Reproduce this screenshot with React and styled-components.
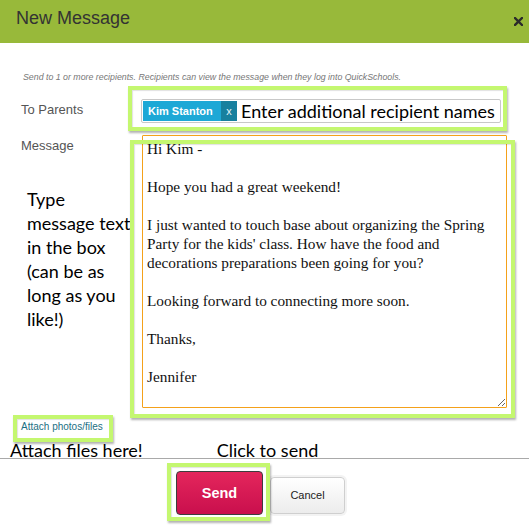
import React from "react";
import styled, { createGlobalStyle } from "styled-components";

const GlobalStyle = createGlobalStyle`
  body {
    margin: 0;
    background: #fff;
    font-family: "Liberation Sans", Arial, sans-serif;
  }
`;

const messageText = `Hi Kim -

Hope you had a great weekend!

I just wanted to touch base about organizing the Spring Party for the kids' class. How have the food and decorations preparations been going for you?

Looking forward to connecting more soon.

Thanks,

Jennifer`;

const App = () => {
  return (
    <Dialog>
      <GlobalStyle />
      <Header>
        <Title>New Message</Title>
        <CloseButton aria-label="close">
          <svg width="9" height="9" viewBox="0 0 9 9">
            <path d="M1 1L8 8M8 1L1 8" stroke="#2b2b2b" strokeWidth="2.4" strokeLinecap="square" />
          </svg>
        </CloseButton>
      </Header>

      <Body>
        <Hint>
          Send to 1 or more recipients. Recipients can view the message when they log into
          QuickSchools.
        </Hint>

        <FieldRow $gap={12}>
          <LabelCol>
            <Label>To Parents</Label>
          </LabelCol>
          <Field $width={360}>
            <RecipientBox>
              <Chip>
                <ChipName>Kim Stanton</ChipName>
                <ChipRemove>x</ChipRemove>
              </Chip>
              <RecipientInput placeholder="Enter additional recipient names" />
            </RecipientBox>
            <Highlight $top={-13} $left={-13} $right={-6} $bottom={-8} />
          </Field>
        </FieldRow>

        <FieldRow $gap={13}>
          <LabelCol>
            <Label>Message</Label>
            <Note $top={33} $left={6} $lh={24}>
              Type
              <br />
              message text
              <br />
              in the box
              <br />
              (can be as
              <br />
              long as you
              <br />
              like!)
            </Note>
          </LabelCol>
          <Field $width={365} $offset={1}>
            <MessageBox readOnly defaultValue={messageText} />
            <Highlight $top={5} $left={-12} $right={-8} $bottom={-10} />
          </Field>
        </FieldRow>

        <AttachRow>
          <AttachLink href="#">Attach photos/files</AttachLink>
          <Highlight $top={-6} $left={-8} $right={-10} $bottom={-9} />
        </AttachRow>

        <NoteRow>
          <Note $left={-11} $lh={18}>Attach files here!</Note>
          <Note $left={74} $lh={18}>Click to send</Note>
        </NoteRow>
      </Body>

      <Footer>
        <ButtonWrap>
          <SendButton>Send</SendButton>
          <Highlight $top={-8} $left={-9} $right={-7} $bottom={-6} />
        </ButtonWrap>
        <CancelButton>Cancel</CancelButton>
      </Footer>
    </Dialog>
  );
};

export default App;

const Dialog = styled.div`
  width: 529px;
  height: 526px;
  overflow: hidden;
  background: #fff;
`;

const Header = styled.div`
  height: 43px;
  background: #98b93a;
  display: flex;
  align-items: flex-start;
  justify-content: space-between;
  padding: 7px 0 0 16px;
  box-sizing: border-box;
`;

const Title = styled.h1`
  margin: 0;
  font-size: 18px;
  line-height: 22px;
  font-weight: normal;
  color: #333;
`;

const CloseButton = styled.span`
  display: flex;
  margin: 10px 6px 0 0;
`;

const Body = styled.div`
  padding: 28px 0 0 21px;
`;

const Hint = styled.div`
  font-size: 8.8px;
  line-height: 12px;
  font-style: italic;
  color: #777;
  padding-left: 2px;
  margin-bottom: 16px;
`;

const FieldRow = styled.div`
  display: grid;
  grid-template-columns: 120px auto;
  align-items: start;
  margin-bottom: ${(p) => p.$gap}px;
`;

const LabelCol = styled.div`
  display: flex;
  flex-direction: column;
`;

const Label = styled.div`
  font-size: 13px;
  line-height: 16px;
  color: #555;
  padding-top: 3px;
`;

const Note = styled.div`
  position: relative;
  z-index: 0;
  margin-top: ${(p) => p.$top || 0}px;
  margin-left: ${(p) => p.$left || 0}px;
  font-family: Lato, "Open Sans", sans-serif;
  font-size: 18px;
  line-height: ${(p) => p.$lh}px;
  color: #000;
  white-space: nowrap;
`;

const Field = styled.div`
  position: relative;
  width: ${(p) => p.$width}px;
  margin-left: ${(p) => p.$offset || 0}px;
  z-index: 1;
`;

const Highlight = styled.span`
  position: absolute;
  top: ${(p) => p.$top}px;
  left: ${(p) => p.$left}px;
  right: ${(p) => p.$right}px;
  bottom: ${(p) => p.$bottom}px;
  border: 4px solid #c4f770;
  box-shadow: 1px 2px 2px rgba(0, 0, 0, 0.3), inset 1px 1px 1px rgba(0, 0, 0, 0.12);
  pointer-events: none;
`;

const RecipientBox = styled.div`
  height: 24px;
  box-sizing: border-box;
  border: 1px solid #c8c8c8;
  border-radius: 2px;
  background: #fff;
  display: flex;
  align-items: center;
  padding-left: 1px;
  overflow: hidden;
`;

const Chip = styled.span`
  display: flex;
  height: 20px;
  flex-shrink: 0;
`;

const ChipName = styled.span`
  background: #1da8d6;
  color: #fff;
  font-size: 11px;
  font-weight: bold;
  line-height: 20px;
  padding: 0 6px 0 5px;
  width: 67px;
`;

const ChipRemove = styled.span`
  background: #18809e;
  color: #e6f5fa;
  font-size: 11px;
  line-height: 20px;
  width: 16px;
  text-align: center;
`;

const RecipientInput = styled.input`
  border: none;
  outline: none;
  flex: 1;
  min-width: 0;
  padding: 0 0 0 4px;
  font-family: Lato, "Open Sans", sans-serif;
  font-size: 18px;
  color: #000;
  background: transparent;
  &::placeholder {
    color: #000;
    opacity: 1;
  }
`;

const MessageBox = styled.textarea`
  display: block;
  width: 100%;
  height: 273px;
  box-sizing: border-box;
  border: 1px solid #f4a11a;
  border-radius: 1px;
  padding: 3px 4px;
  margin: 0;
  resize: vertical;
  outline: none;
  font-family: "Liberation Serif", Georgia, serif;
  font-size: 15.3px;
  line-height: 19px;
  color: #111;
  overflow: hidden;
`;

const AttachRow = styled.div`
  position: relative;
  z-index: 1;
  display: flex;
  width: fit-content;
  height: 12px;
  margin: 0 0 8px 0;
`;

const AttachLink = styled.a`
  font-size: 10px;
  line-height: 12px;
  color: #1b6f82;
  text-decoration: none;
  display: block;
`;

const NoteRow = styled.div`
  display: flex;
  height: 17px;
  overflow: visible;
`;

const Footer = styled.div`
  border-top: 1px solid #a9a9a9;
  display: flex;
  justify-content: center;
  align-items: center;
  gap: 7px;
  padding: 12px 8px 0 0;
`;

const ButtonWrap = styled.div`
  position: relative;
  display: flex;
`;

const SendButton = styled.button`
  width: 87px;
  height: 44px;
  border: 1px solid #3d3d3d;
  border-radius: 4px;
  background: linear-gradient(#e4265c, #c90f4d);
  color: #fff;
  font-family: "Liberation Sans", Arial, sans-serif;
  font-size: 14.5px;
  font-weight: bold;
  cursor: pointer;
`;

const CancelButton = styled.button`
  width: 75px;
  height: 37px;
  margin-top: 4px;
  border: 1px solid #cfcfcf;
  border-radius: 4px;
  background: linear-gradient(#fff, #ececec);
  box-shadow: 0 0 0 2px #f3f3f3;
  color: #222;
  font-family: "Liberation Sans", Arial, sans-serif;
  font-size: 11px;
  cursor: pointer;
`;
